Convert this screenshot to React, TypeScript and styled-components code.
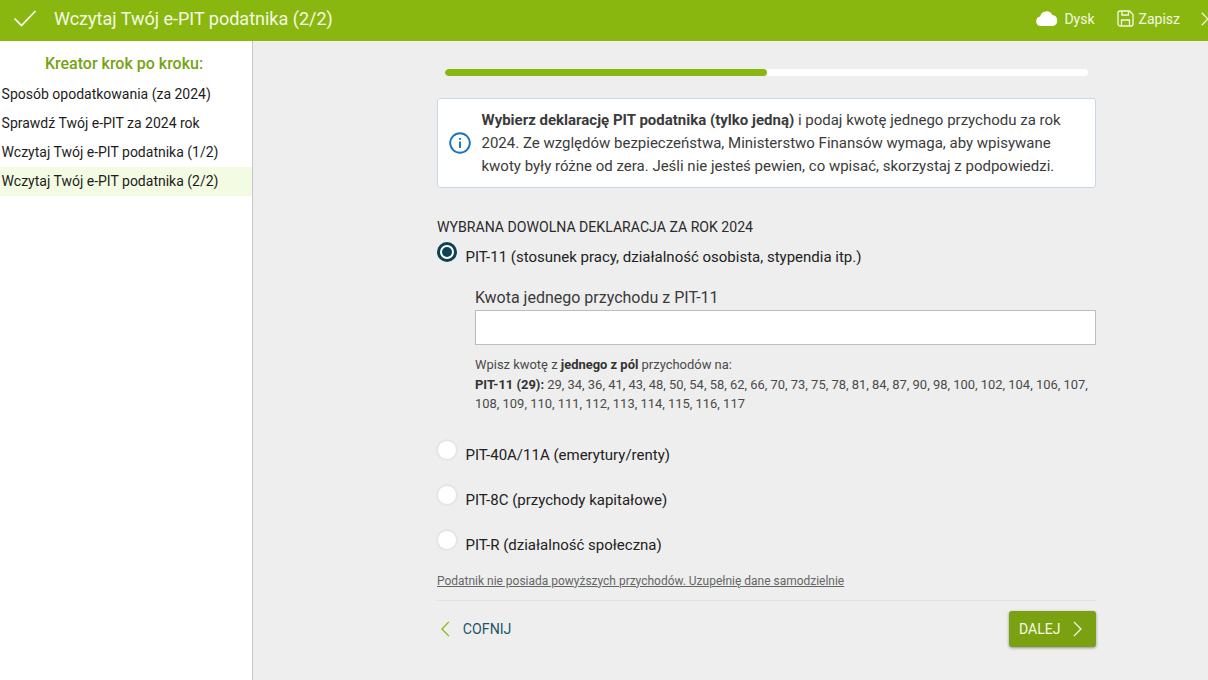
import React from "react";
import styled, { createGlobalStyle } from "styled-components";

const Global = createGlobalStyle`
  html, body { margin: 0; padding: 0; height: 100%; overflow: hidden; }
  body { font-family: Roboto, "Liberation Sans", sans-serif; background: #eeeeee; color: #222; }
`;
const Page = styled.div`display: flex; flex-direction: column; height: 680px; width: 1208px; overflow: hidden;`;
const Header = styled.header`
  height: 41px; box-sizing: border-box; flex: none; background: #8ab70f; color: #f4f9e4; display: flex; align-items: center;
  padding: 0 0 4px 13px; overflow: hidden;
`;
const HeaderTitle = styled.h1`margin: 0 0 0 17px; font-size: 18px; font-weight: 400; line-height: 24px; flex: 1;`;
const HeaderAction = styled.span<{ $gap: number; $end: number }>`
  display: flex; align-items: center; gap: ${(p) => p.$gap}px; font-size: 14px; margin-right: ${(p) => p.$end}px;
`;
const HeaderEnd = styled.span`display: flex; width: 7px; overflow: hidden; align-items: center;`;
const Body = styled.div`flex: 1; display: flex; min-height: 0;`;
const Sidebar = styled.aside`width: 252px; flex: none; background: #fff; border-right: 1px solid #c6c6c6; padding-top: 13px;`;
const SideTitle = styled.div`text-align: center; color: #76a313; font-size: 16px; font-weight: 500; line-height: 20px; margin: 0 4px 6px 0;`;
const SideItem = styled.div<{ $active?: boolean }>`
  height: 29px; line-height: 29px; padding-left: 1.6px; font-size: 14px; color: #1d1d1d;
  background: ${(p) => (p.$active ? "#f4fbe3" : "transparent")};
`;
const Main = styled.main`flex: 1; padding: 28px 0 0 184px;`;
const Column = styled.div`width: 659px;`;
const Track = styled.div`width: 643px; height: 7px; margin-left: 8px; border-radius: 4px; background: #fff; overflow: hidden;`;
const Fill = styled.div`height: 100%; background: #8ab70f; border-radius: 4px;`;
const InfoBox = styled.div`
  margin-top: 22px; height: 90px; box-sizing: border-box; background: #fff; border: 1px solid #c9d8e6; border-radius: 3px;
  display: flex; align-items: center; padding-left: 11px; color: #3b3b3b;
`;
const InfoText = styled.p`margin: 0 0 0 10.5px; font-size: 15px; line-height: 23px; width: 600px;`;
const Section = styled.div`margin-top: 31px; font-size: 14.1px; line-height: 16px; color: #2b2b2b;`;
const RadioRow = styled.div<{ $gap?: number }>`display: flex; align-items: flex-start; margin-top: ${(p) => p.$gap ?? 0}px;`;
const Radio = styled.span<{ $on?: boolean }>`
  width: 20px; height: 20px; border-radius: 50%; flex: none; box-sizing: border-box; background: #fff;
  border: ${(p) => (p.$on ? "3px solid #0d4252" : "1px solid #e4e4e4")};
  display: flex; align-items: center; justify-content: center;
  box-shadow: ${(p) => (p.$on ? "none" : "0 0 2px rgba(0,0,0,.1)")};
`;
const Dot = styled.span`width: 10px; height: 10px; border-radius: 50%; background: #0d4252;`;
const RadioLabel = styled.span`margin: 6px 0 0 8.5px; font-size: 15px; line-height: 18px; color: #222;`;
const Sub = styled.div`margin: 22px 0 0 38px;`;
const FieldLabel = styled.label`display: block; font-size: 16px; line-height: 19px; color: #3a3a3a;`;
const Input = styled.input`
  display: block; width: 100%; height: 35px; box-sizing: border-box; margin-top: 3px; background: #fff;
  border: 1px solid #bdbdbd; outline: none;
`;
const Hint = styled.p`margin: 10px 0 0; font-size: 12.95px; line-height: 19.5px; color: #4a4a4a; strong { color: #333; font-weight: 700; }`;
const SkipLink = styled.a`display: block; margin-top: 19px; font-size: 11.98px; line-height: 16px; color: #666; text-decoration: underline;`;
const Footer = styled.div`
  margin-top: 11px; border-top: 1px solid #e2e2e2; padding-top: 10px; display: flex; justify-content: space-between; align-items: center;
`;
const Back = styled.span`display: flex; align-items: center; gap: 13px; margin-left: 4px; color: #1f5566; font-size: 14.2px;`;
const Next = styled.button`
  width: 87px; height: 36px; border: none; border-radius: 3px; background: #7aa111; color: #f6fbe6; font: inherit; font-size: 14px;
  display: flex; align-items: center; gap: 13px; padding: 0 0 0 10px; box-shadow: 0 1px 3px rgba(0,0,0,.4);
`;

const Check = () => (
  <svg width="24" height="17" viewBox="0 0 24 17" fill="none" stroke="#fff" strokeWidth="1.7"><path d="M1.5 8.5 8.5 15.5 22.5 1" /></svg>
);
const Cloud = () => (
  <svg width="22" height="15" viewBox="0 0 22 15" fill="#fff"><path d="M5 15a4.8 4.8 0 0 1-.9-9.5A6.5 6.5 0 0 1 16.3 4 5.6 5.6 0 0 1 17 15z" /></svg>
);
const Save = () => (
  <svg width="17" height="17" viewBox="0 0 17 17" fill="none" stroke="#f4f9e4" strokeWidth="1.3">
    <path d="M3 1h9.5L16 4.5V14a2 2 0 0 1-2 2H3a2 2 0 0 1-2-2V3a2 2 0 0 1 2-2z" />
    <path d="M5 1v4h6.5V1M4.5 16v-6h8v6" />
  </svg>
);
const Chevron = ({ dir, color, h = 18 }: { dir: "l" | "r"; color: string; h?: number }) => (
  <svg width={h * 0.55} height={h} viewBox="0 0 10 18" preserveAspectRatio="none" fill="none" stroke={color} strokeWidth="1.5" style={{ flex: "none" }}>
    <path d={dir === "r" ? "M1 1l8 8-8 8" : "M9 1 1 9l8 8"} />
  </svg>
);
const Info = () => (
  <svg width="22" height="22" viewBox="0 0 22 22" fill="none" stroke="#1b73c0" strokeWidth="1.9" style={{ flex: "none" }}>
    <circle cx="11" cy="11" r="9.8" /><path d="M11 9.5v6.5M11 6v1.8" />
  </svg>
);

export default function App() {
  return (
    <Page>
      <Global />
      <Header>
        <Check />
        <HeaderTitle>Wczytaj Twój e-PIT podatnika (2/2)</HeaderTitle>
        <HeaderAction $gap={6} $end={22}><Cloud />Dysk</HeaderAction>
        <HeaderAction $gap={5} $end={21}><Save />Zapisz</HeaderAction>
        <HeaderEnd><Chevron dir="r" color="#f4f9e4" h={14} /></HeaderEnd>
      </Header>
      <Body>
        <Sidebar>
          <SideTitle>Kreator krok po kroku:</SideTitle>
          <SideItem>Sposób opodatkowania (za 2024)</SideItem>
          <SideItem>Sprawdź Twój e-PIT za 2024 rok</SideItem>
          <SideItem>Wczytaj Twój e-PIT podatnika (1/2)</SideItem>
          <SideItem $active>Wczytaj Twój e-PIT podatnika (2/2)</SideItem>
        </Sidebar>
        <Main>
          <Column>
            <Track><Fill style={{ width: "50%" }} /></Track>
            <InfoBox>
              <Info />
              <InfoText>
                <strong>Wybierz deklarację PIT podatnika (tylko jedną)</strong> i podaj kwotę jednego przychodu za rok 2024. Ze względów bezpieczeństwa, Ministerstwo Finansów wymaga, aby wpisywane kwoty były różne od zera. Jeśli nie jesteś pewien, co wpisać, skorzystaj z podpowiedzi.
              </InfoText>
            </InfoBox>
            <Section>WYBRANA DOWOLNA DEKLARACJA ZA ROK 2024</Section>
            <RadioRow $gap={7}>
              <Radio $on><Dot /></Radio>
              <RadioLabel>PIT-11 (stosunek pracy, działalność osobista, stypendia itp.)</RadioLabel>
            </RadioRow>
            <Sub>
              <FieldLabel>Kwota jednego przychodu z PIT-11</FieldLabel>
              <Input aria-label="Kwota" />
              <Hint>
                Wpisz kwotę z <strong>jednego z pól</strong> przychodów na:<br />
                <strong>PIT-11 (29):</strong> 29, 34, 36, 41, 43, 48, 50, 54, 58, 62, 66, 70, 73, 75, 78, 81, 84, 87, 90, 98, 100, 102, 104, 106, 107, 108, 109, 110, 111, 112, 113, 114, 115, 116, 117
              </Hint>
            </Sub>
            <RadioRow $gap={26}><Radio /><RadioLabel>PIT-40A/11A (emerytury/renty)</RadioLabel></RadioRow>
            <RadioRow $gap={21}><Radio /><RadioLabel>PIT-8C (przychody kapitałowe)</RadioLabel></RadioRow>
            <RadioRow $gap={21}><Radio /><RadioLabel>PIT-R (działalność społeczna)</RadioLabel></RadioRow>
            <SkipLink>Podatnik nie posiada powyższych przychodów. Uzupełnię dane samodzielnie</SkipLink>
            <Footer>
              <Back><Chevron dir="l" color="#8ab70f" h={16} />COFNIJ</Back>
              <Next>DALEJ<Chevron dir="r" color="#f6fbe6" h={16} /></Next>
            </Footer>
          </Column>
        </Main>
      </Body>
    </Page>
  );
}
